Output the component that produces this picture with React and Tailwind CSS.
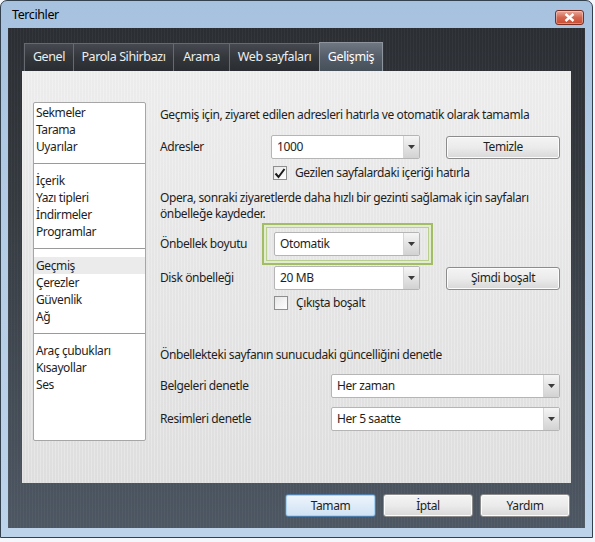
const font = { fontFamily: '"Noto Sans", "Open Sans", sans-serif' };

const groups = [
  ['Sekmeler', 'Tarama', 'Uyarılar'],
  ['İçerik', 'Yazı tipleri', 'İndirmeler', 'Programlar'],
  ['Geçmiş', 'Çerezler', 'Güvenlik', 'Ağ'],
  ['Araç çubukları', 'Kısayollar', 'Ses'],
];

const tabs = [
  { label: 'Genel', w: 'w-[50px]' },
  { label: 'Parola Sihirbazı', w: 'w-[101px]' },
  { label: 'Arama', w: 'w-[57px]' },
  { label: 'Web sayfaları', w: 'w-[91px]' },
];

function Arrow() {
  return (
    <svg width="7" height="4" viewBox="0 0 7 4">
      <path d="M0 0h7L3.5 4z" fill="#3a3a3a" />
    </svg>
  );
}

function Combo({ value, className }) {
  return (
    <div className={'flex h-[24px] rounded-[2px] border border-[#b5b5b5] bg-white ' + className}>
      <div className="flex flex-1 items-center pl-[5px]">{value}</div>
      <div className="flex w-[16px] items-center justify-center rounded-r-[1px] border-l border-[#d6d6d6] bg-gradient-to-b from-[#f5f5f5] to-[#d2d2d2]">
        <Arrow />
      </div>
    </div>
  );
}

function Button({ children, focused, className }) {
  return (
    <div
      className={
        'flex h-[23px] items-center justify-center rounded-[3px] border ' +
        (focused
          ? 'border-[#4f7eab] bg-gradient-to-b from-[#eef5fc] to-[#cfe2f4] shadow-[inset_0_0_0_1px_#a9d2f3] '
          : 'border-[#8c8c8c] bg-gradient-to-b from-[#f4f4f4] via-[#ebebeb] to-[#d8d8d8] shadow-[inset_0_0_0_1px_#fcfcfc] ') +
        className
      }
    >
      {children}
    </div>
  );
}

function Check({ checked }) {
  return (
    <div className="flex h-[14px] w-[14px] items-center justify-center border border-[#8e8f8f] bg-gradient-to-br from-[#e6e6e6] to-white">
      {checked && (
        <svg width="12" height="11" viewBox="0 0 12 11">
          <path d="M1.5 5.5l3 3.5L10.5 1" stroke="#1a1a1a" strokeWidth="2" fill="none" />
        </svg>
      )}
    </div>
  );
}

export default function App() {
  return (
    <div className="h-[542px] w-[595px] overflow-hidden bg-[#f4f7fb] text-[12px] tracking-[-0.4px] text-[#1e1e1e]" style={font}>
      <div className="flex h-[538px] w-[593px] flex-col rounded-t-[7px] border border-[#33404e] bg-gradient-to-b from-[#a7c2df] via-[#b6cde6] to-[#bcd3ea]">
        {/* title bar */}
        <div className="relative flex h-[27px] items-center pl-[11px] pt-[2px] text-[12.5px] text-black">
          Tercihler
          <div className="absolute left-[554px] top-[9px] flex h-[15px] w-[29px] items-center justify-center rounded-[3px] border border-[#7b2f22] bg-gradient-to-b from-[#e7a89c] via-[#d4664f] to-[#c94b2f] shadow-[inset_0_0_0_1px_rgba(255,255,255,0.35)]">
            <svg width="11" height="9" viewBox="0 0 11 9">
              <path d="M1.5 1l8 7M9.5 1l-8 7" stroke="white" strokeWidth="2.4" />
            </svg>
          </div>
        </div>

        {/* dark body */}
        <div className="mx-[7px] flex h-[500px] flex-col bg-[repeating-linear-gradient(90deg,rgba(255,255,255,0.035)_0px,rgba(255,255,255,0.035)_1px,transparent_1px,transparent_3px),linear-gradient(180deg,#2b2e33_0%,#353a40_35%,#4d5763_100%)]">
          {/* tabs */}
          <div className="flex h-[43px] items-end pl-[16px] text-[12.5px]">
            {tabs.map((t) => (
              <div
                key={t.label}
                className={
                  '-ml-px flex h-[28px] items-center justify-center border border-b-0 border-[#666b72] bg-gradient-to-b from-[#464a50] via-[#33373c] to-[#2a2d31] text-[#eeeeee] first:ml-0 ' +
                  t.w
                }
              >
                {t.label}
              </div>
            ))}
            <div className="-ml-px flex h-[29px] w-[64px] items-center justify-center border border-b-0 border-[#8d949c] bg-gradient-to-b from-[#6f7882] via-[#555e68] to-[#46505a] text-white">
              Gelişmiş
            </div>
          </div>

          {/* panel */}
          <div className="mx-[14px] flex h-[412px] bg-[repeating-linear-gradient(90deg,rgba(255,255,255,0.25)_0px,rgba(255,255,255,0.25)_1px,transparent_1px,transparent_3px),linear-gradient(180deg,#ececec_0%,#dedede_100%)] pl-[11px] pt-[31px]">
            {/* left list */}
            <div className="h-[339px] w-[113px] rounded-[2px] border border-[#a6a6a6] bg-white pt-[1px]">
              {groups.map((g, gi) => (
                <div key={gi}>
                  {gi > 0 && (
                    <div className="flex h-[17px] items-center">
                      <div className="h-px w-full bg-[#9a9a9a]" />
                    </div>
                  )}
                  {g.map((it) => (
                    <div
                      key={it}
                      className={'h-[17px] pl-[2px] leading-[17px] ' + (it === 'Geçmiş' ? 'bg-[#ebebeb]' : '')}
                    >
                      {it}
                    </div>
                  ))}
                </div>
              ))}
            </div>

            {/* right content */}
            <div className="ml-[14px] flex w-[400px] flex-col pt-[4px]">
              <div className="leading-[17px]">Geçmiş için, ziyaret edilen adresleri hatırla ve otomatik olarak tamamla</div>

              <div className="mt-[12px] flex items-center">
                <div className="w-[111px]">Adresler</div>
                <Combo value="1000" className="w-[149px]" />
                <Button className="ml-[26px] w-[114px]">Temizle</Button>
              </div>

              <div className="mt-[7px] flex h-[14px] items-center pl-[113px]">
                <Check checked />
                <span className="ml-[8px]">Gezilen sayfalardaki içeriği hatırla</span>
              </div>

              <div className="mt-[10px] leading-[16px]">
                Opera, sonraki ziyaretlerde daha hızlı bir gezinti sağlamak için sayfaları
                <br />
                önbelleğe kaydeder.
              </div>

              <div className="relative mt-[10px] flex items-center">
                <div className="w-[114px]">Önbellek boyutu</div>
                <Combo value="Otomatik" className="w-[146px]" />
                <div className="absolute left-[102px] top-[-9px] h-[42px] w-[171px] border-2 border-[#a3bd66]">
                  <div className="h-full w-full border-2 border-[#e3ebd0]">
                    <div className="h-full w-full border border-[#b9cf8d]" />
                  </div>
                </div>
              </div>

              <div className="mt-[10px] flex items-center">
                <div className="w-[114px]">Disk önbelleği</div>
                <Combo value="20 MB" className="w-[146px]" />
                <Button className="ml-[26px] w-[114px]">Şimdi boşalt</Button>
              </div>

              <div className="mt-[6px] flex h-[14px] items-center pl-[114px]">
                <Check />
                <span className="ml-[8px]">Çıkışta boşalt</span>
              </div>

              <div className="mt-[37px] leading-[16px]">Önbellekteki sayfanın sunucudaki güncelliğini denetle</div>

              <div className="mt-[11px] flex items-center">
                <div className="w-[171px]">Belgeleri denetle</div>
                <Combo value="Her zaman" className="w-[229px]" />
              </div>

              <div className="mt-[9px] flex items-center">
                <div className="w-[171px]">Resimleri denetle</div>
                <Combo value="Her 5 saatte" className="w-[229px]" />
              </div>
            </div>
          </div>

          {/* bottom buttons */}
          <div className="mt-[11px] flex justify-end gap-[7px] pr-[15px]">
            <Button focused className="w-[91px]">Tamam</Button>
            <Button className="w-[90px]">İptal</Button>
            <Button className="w-[90px]">Yardım</Button>
          </div>
        </div>
      </div>
    </div>
  );
}
